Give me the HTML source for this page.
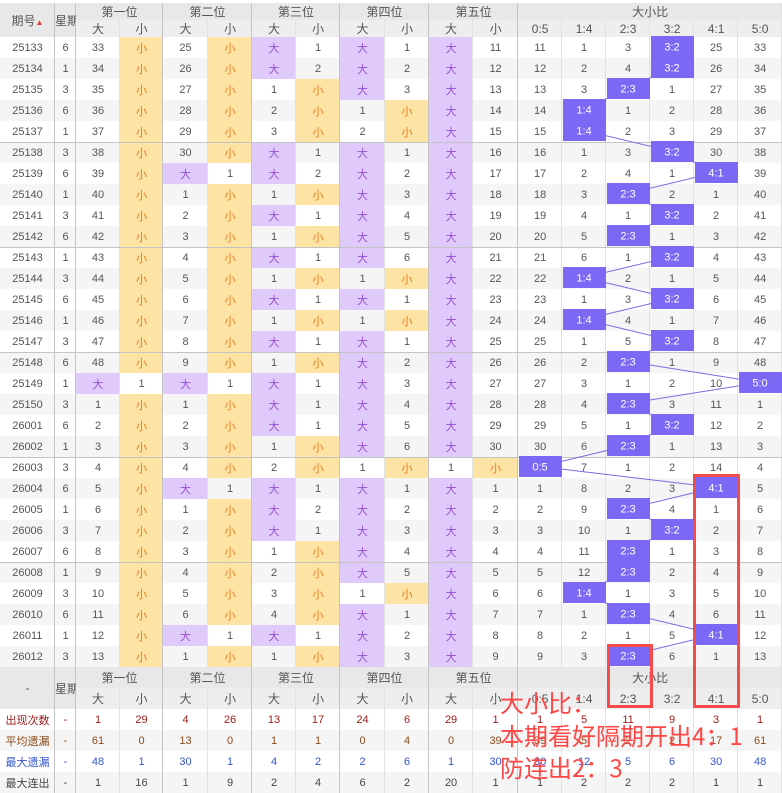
<!DOCTYPE html>
<html><head><meta charset="utf-8"><style>
body{margin:0;background:#fff;width:782px;height:792px;overflow:hidden;position:relative;font-family:"Liberation Sans","Noto Sans CJK SC",sans-serif;}
table{position:absolute;left:0;top:3px;border-collapse:separate;border-spacing:0;table-layout:fixed;width:782px;font-size:11px;color:#555;}
td{padding:0;text-align:center;height:21px;box-shadow:inset -1px 0 0 #e2e2e2;white-space:nowrap;overflow:hidden}
tr.d:nth-child(even) td{background:#f5f5f5}
tr.d td:nth-child(1),tr.d td:nth-child(2),tr.d td:nth-child(4),tr.d td:nth-child(6),tr.d td:nth-child(8),tr.d td:nth-child(10),tr.d td:nth-child(12){box-shadow:inset -1px 0 0 #c4c4c4}
tr.g td{box-shadow:inset 0 1px 0 #c4c4c4,inset -1px 0 0 #e2e2e2}
tr.g td:nth-child(1),tr.g td:nth-child(2),tr.g td:nth-child(4),tr.g td:nth-child(6),tr.g td:nth-child(8),tr.g td:nth-child(10),tr.g td:nth-child(12){box-shadow:inset 0 1px 0 #c4c4c4,inset -1px 0 0 #c4c4c4}
tr.d td.b{background:#e0c9fb!important;color:#9650d0}
tr.d td.s{background:#fde3a4!important;color:#f07a1c}
.h td{background:#e8e8e8;font-size:12px;color:#555}
.h2 td{background:#eeeeee}
td.G{box-shadow:inset -1px 0 0 #c4c4c4}
.h1 td{height:17px}.h2x td{height:16px}
.r1 td{color:#a01c1c}.r2 td{color:#8a4a1a}.r3 td{color:#3355cc}.r4 td{color:#444}
.st td{background:#fff}.st:nth-child(even) td{background:#f5f5f5}
svg{position:absolute;left:0;top:0}
.box{position:absolute;border:3px solid #f44b4b;box-sizing:border-box}
.ann{position:absolute;left:500px;color:#ff4646;font-size:24px;font-family:"Noto Sans CJK SC",sans-serif;line-height:32px;white-space:nowrap}
</style></head><body>
<table>
<colgroup><col style="width:55px"><col style="width:21px"><col style="width:44px"><col style="width:43px"><col style="width:45px"><col style="width:44px"><col style="width:44px"><col style="width:44px"><col style="width:45px"><col style="width:44px"><col style="width:44px"><col style="width:45px"><col style="width:44px"><col style="width:44px"><col style="width:44px"><col style="width:44px"><col style="width:44px"><col style="width:44px"></colgroup>
<tr class="h h1"><td rowspan="2" class="G">期号<span style="font-size:8px;color:#e33">▲</span></td><td rowspan="2" class="G">星期</td><td colspan="2" class="G">第一位</td><td colspan="2" class="G">第二位</td><td colspan="2" class="G">第三位</td><td colspan="2" class="G">第四位</td><td colspan="2" class="G">第五位</td><td colspan="6">大小比</td></tr>
<tr class="h h2 h2x"><td>大</td><td class="G">小</td><td>大</td><td class="G">小</td><td>大</td><td class="G">小</td><td>大</td><td class="G">小</td><td>大</td><td class="G">小</td><td>0:5</td><td>1:4</td><td>2:3</td><td>3:2</td><td>4:1</td><td>5:0</td></tr>
<tbody>
<tr class="d"><td>25133</td><td>6</td><td>33</td><td class="s">小</td><td>25</td><td class="s">小</td><td class="b">大</td><td>1</td><td class="b">大</td><td>1</td><td class="b">大</td><td>11</td><td>11</td><td>1</td><td>3</td><td></td><td>25</td><td>33</td></tr>
<tr class="d"><td>25134</td><td>1</td><td>34</td><td class="s">小</td><td>26</td><td class="s">小</td><td class="b">大</td><td>2</td><td class="b">大</td><td>2</td><td class="b">大</td><td>12</td><td>12</td><td>2</td><td>4</td><td></td><td>26</td><td>34</td></tr>
<tr class="d"><td>25135</td><td>3</td><td>35</td><td class="s">小</td><td>27</td><td class="s">小</td><td>1</td><td class="s">小</td><td class="b">大</td><td>3</td><td class="b">大</td><td>13</td><td>13</td><td>3</td><td></td><td>1</td><td>27</td><td>35</td></tr>
<tr class="d"><td>25136</td><td>6</td><td>36</td><td class="s">小</td><td>28</td><td class="s">小</td><td>2</td><td class="s">小</td><td>1</td><td class="s">小</td><td class="b">大</td><td>14</td><td>14</td><td></td><td>1</td><td>2</td><td>28</td><td>36</td></tr>
<tr class="d"><td>25137</td><td>1</td><td>37</td><td class="s">小</td><td>29</td><td class="s">小</td><td>3</td><td class="s">小</td><td>2</td><td class="s">小</td><td class="b">大</td><td>15</td><td>15</td><td></td><td>2</td><td>3</td><td>29</td><td>37</td></tr>
<tr class="d g"><td>25138</td><td>3</td><td>38</td><td class="s">小</td><td>30</td><td class="s">小</td><td class="b">大</td><td>1</td><td class="b">大</td><td>1</td><td class="b">大</td><td>16</td><td>16</td><td>1</td><td>3</td><td></td><td>30</td><td>38</td></tr>
<tr class="d"><td>25139</td><td>6</td><td>39</td><td class="s">小</td><td class="b">大</td><td>1</td><td class="b">大</td><td>2</td><td class="b">大</td><td>2</td><td class="b">大</td><td>17</td><td>17</td><td>2</td><td>4</td><td>1</td><td></td><td>39</td></tr>
<tr class="d"><td>25140</td><td>1</td><td>40</td><td class="s">小</td><td>1</td><td class="s">小</td><td>1</td><td class="s">小</td><td class="b">大</td><td>3</td><td class="b">大</td><td>18</td><td>18</td><td>3</td><td></td><td>2</td><td>1</td><td>40</td></tr>
<tr class="d"><td>25141</td><td>3</td><td>41</td><td class="s">小</td><td>2</td><td class="s">小</td><td class="b">大</td><td>1</td><td class="b">大</td><td>4</td><td class="b">大</td><td>19</td><td>19</td><td>4</td><td>1</td><td></td><td>2</td><td>41</td></tr>
<tr class="d"><td>25142</td><td>6</td><td>42</td><td class="s">小</td><td>3</td><td class="s">小</td><td>1</td><td class="s">小</td><td class="b">大</td><td>5</td><td class="b">大</td><td>20</td><td>20</td><td>5</td><td></td><td>1</td><td>3</td><td>42</td></tr>
<tr class="d g"><td>25143</td><td>1</td><td>43</td><td class="s">小</td><td>4</td><td class="s">小</td><td class="b">大</td><td>1</td><td class="b">大</td><td>6</td><td class="b">大</td><td>21</td><td>21</td><td>6</td><td>1</td><td></td><td>4</td><td>43</td></tr>
<tr class="d"><td>25144</td><td>3</td><td>44</td><td class="s">小</td><td>5</td><td class="s">小</td><td>1</td><td class="s">小</td><td>1</td><td class="s">小</td><td class="b">大</td><td>22</td><td>22</td><td></td><td>2</td><td>1</td><td>5</td><td>44</td></tr>
<tr class="d"><td>25145</td><td>6</td><td>45</td><td class="s">小</td><td>6</td><td class="s">小</td><td class="b">大</td><td>1</td><td class="b">大</td><td>1</td><td class="b">大</td><td>23</td><td>23</td><td>1</td><td>3</td><td></td><td>6</td><td>45</td></tr>
<tr class="d"><td>25146</td><td>1</td><td>46</td><td class="s">小</td><td>7</td><td class="s">小</td><td>1</td><td class="s">小</td><td>1</td><td class="s">小</td><td class="b">大</td><td>24</td><td>24</td><td></td><td>4</td><td>1</td><td>7</td><td>46</td></tr>
<tr class="d"><td>25147</td><td>3</td><td>47</td><td class="s">小</td><td>8</td><td class="s">小</td><td class="b">大</td><td>1</td><td class="b">大</td><td>1</td><td class="b">大</td><td>25</td><td>25</td><td>1</td><td>5</td><td></td><td>8</td><td>47</td></tr>
<tr class="d g"><td>25148</td><td>6</td><td>48</td><td class="s">小</td><td>9</td><td class="s">小</td><td>1</td><td class="s">小</td><td class="b">大</td><td>2</td><td class="b">大</td><td>26</td><td>26</td><td>2</td><td></td><td>1</td><td>9</td><td>48</td></tr>
<tr class="d"><td>25149</td><td>1</td><td class="b">大</td><td>1</td><td class="b">大</td><td>1</td><td class="b">大</td><td>1</td><td class="b">大</td><td>3</td><td class="b">大</td><td>27</td><td>27</td><td>3</td><td>1</td><td>2</td><td>10</td><td></td></tr>
<tr class="d"><td>25150</td><td>3</td><td>1</td><td class="s">小</td><td>1</td><td class="s">小</td><td class="b">大</td><td>1</td><td class="b">大</td><td>4</td><td class="b">大</td><td>28</td><td>28</td><td>4</td><td></td><td>3</td><td>11</td><td>1</td></tr>
<tr class="d"><td>26001</td><td>6</td><td>2</td><td class="s">小</td><td>2</td><td class="s">小</td><td class="b">大</td><td>1</td><td class="b">大</td><td>5</td><td class="b">大</td><td>29</td><td>29</td><td>5</td><td>1</td><td></td><td>12</td><td>2</td></tr>
<tr class="d"><td>26002</td><td>1</td><td>3</td><td class="s">小</td><td>3</td><td class="s">小</td><td>1</td><td class="s">小</td><td class="b">大</td><td>6</td><td class="b">大</td><td>30</td><td>30</td><td>6</td><td></td><td>1</td><td>13</td><td>3</td></tr>
<tr class="d g"><td>26003</td><td>3</td><td>4</td><td class="s">小</td><td>4</td><td class="s">小</td><td>2</td><td class="s">小</td><td>1</td><td class="s">小</td><td>1</td><td class="s">小</td><td></td><td>7</td><td>1</td><td>2</td><td>14</td><td>4</td></tr>
<tr class="d"><td>26004</td><td>6</td><td>5</td><td class="s">小</td><td class="b">大</td><td>1</td><td class="b">大</td><td>1</td><td class="b">大</td><td>1</td><td class="b">大</td><td>1</td><td>1</td><td>8</td><td>2</td><td>3</td><td></td><td>5</td></tr>
<tr class="d"><td>26005</td><td>1</td><td>6</td><td class="s">小</td><td>1</td><td class="s">小</td><td class="b">大</td><td>2</td><td class="b">大</td><td>2</td><td class="b">大</td><td>2</td><td>2</td><td>9</td><td></td><td>4</td><td>1</td><td>6</td></tr>
<tr class="d"><td>26006</td><td>3</td><td>7</td><td class="s">小</td><td>2</td><td class="s">小</td><td class="b">大</td><td>1</td><td class="b">大</td><td>3</td><td class="b">大</td><td>3</td><td>3</td><td>10</td><td>1</td><td></td><td>2</td><td>7</td></tr>
<tr class="d"><td>26007</td><td>6</td><td>8</td><td class="s">小</td><td>3</td><td class="s">小</td><td>1</td><td class="s">小</td><td class="b">大</td><td>4</td><td class="b">大</td><td>4</td><td>4</td><td>11</td><td></td><td>1</td><td>3</td><td>8</td></tr>
<tr class="d g"><td>26008</td><td>1</td><td>9</td><td class="s">小</td><td>4</td><td class="s">小</td><td>2</td><td class="s">小</td><td class="b">大</td><td>5</td><td class="b">大</td><td>5</td><td>5</td><td>12</td><td></td><td>2</td><td>4</td><td>9</td></tr>
<tr class="d"><td>26009</td><td>3</td><td>10</td><td class="s">小</td><td>5</td><td class="s">小</td><td>3</td><td class="s">小</td><td>1</td><td class="s">小</td><td class="b">大</td><td>6</td><td>6</td><td></td><td>1</td><td>3</td><td>5</td><td>10</td></tr>
<tr class="d"><td>26010</td><td>6</td><td>11</td><td class="s">小</td><td>6</td><td class="s">小</td><td>4</td><td class="s">小</td><td class="b">大</td><td>1</td><td class="b">大</td><td>7</td><td>7</td><td>1</td><td></td><td>4</td><td>6</td><td>11</td></tr>
<tr class="d"><td>26011</td><td>1</td><td>12</td><td class="s">小</td><td class="b">大</td><td>1</td><td class="b">大</td><td>1</td><td class="b">大</td><td>2</td><td class="b">大</td><td>8</td><td>8</td><td>2</td><td>1</td><td>5</td><td></td><td>12</td></tr>
<tr class="d"><td>26012</td><td>3</td><td>13</td><td class="s">小</td><td>1</td><td class="s">小</td><td>1</td><td class="s">小</td><td class="b">大</td><td>3</td><td class="b">大</td><td>9</td><td>9</td><td>3</td><td></td><td>6</td><td>1</td><td>13</td></tr>
</tbody>
<tr class="h"><td rowspan="2" class="G">-</td><td rowspan="2" class="G">星期</td><td colspan="2" class="G">第一位</td><td colspan="2" class="G">第二位</td><td colspan="2" class="G">第三位</td><td colspan="2" class="G">第四位</td><td colspan="2" class="G">第五位</td><td colspan="6">大小比</td></tr>
<tr class="h h2"><td>大</td><td class="G">小</td><td>大</td><td class="G">小</td><td>大</td><td class="G">小</td><td>大</td><td class="G">小</td><td>大</td><td class="G">小</td><td>0:5</td><td>1:4</td><td>2:3</td><td>3:2</td><td>4:1</td><td>5:0</td></tr>
<tr class="st r1"><td class="G">出现次数</td><td class="G">-</td><td>1</td><td class="G">29</td><td>4</td><td class="G">26</td><td>13</td><td class="G">17</td><td>24</td><td class="G">6</td><td>29</td><td class="G">1</td><td>1</td><td>5</td><td>11</td><td>9</td><td>3</td><td>1</td></tr>
<tr class="st r2"><td class="G">平均遗漏</td><td class="G">-</td><td>61</td><td class="G">0</td><td>13</td><td class="G">0</td><td>1</td><td class="G">1</td><td>0</td><td class="G">4</td><td>0</td><td class="G">39</td><td>39</td><td>5</td><td>2</td><td>2</td><td>17</td><td>61</td></tr>
<tr class="st r3"><td class="G">最大遗漏</td><td class="G">-</td><td>48</td><td class="G">1</td><td>30</td><td class="G">1</td><td>4</td><td class="G">2</td><td>2</td><td class="G">6</td><td>1</td><td class="G">30</td><td>30</td><td>12</td><td>5</td><td>6</td><td>30</td><td>48</td></tr>
<tr class="st r4"><td class="G">最大连出</td><td class="G">-</td><td>1</td><td class="G">16</td><td>1</td><td class="G">9</td><td>2</td><td class="G">4</td><td>6</td><td class="G">2</td><td>20</td><td class="G">1</td><td>1</td><td>2</td><td>2</td><td>2</td><td>1</td><td>1</td></tr>
</table>
<svg width="782" height="792" font-family="Liberation Sans,sans-serif" font-size="11">
<polyline fill="none" stroke="#7a6be0" stroke-width="1" points="672,46.5 672,67.5 628,88.5 584,109.5 584,130.5 672,151.5 716,172.5 628,193.5 672,214.5 628,235.5 672,256.5 584,277.5 672,298.5 584,319.5 672,340.5 628,361.5 760,382.5 628,403.5 672,424.5 628,445.5 540,466.5 716,487.5 628,508.5 672,529.5 628,550.5 628,571.5 584,592.5 628,613.5 716,634.5 628,655.5"/>
<g fill="#7b68f5">
<rect x="651" y="36" width="43" height="21"/><rect x="651" y="57" width="43" height="21"/><rect x="607" y="78" width="43" height="21"/><rect x="563" y="99" width="43" height="21"/><rect x="563" y="120" width="43" height="21"/><rect x="651" y="141" width="43" height="21"/><rect x="695" y="162" width="43" height="21"/><rect x="607" y="183" width="43" height="21"/><rect x="651" y="204" width="43" height="21"/><rect x="607" y="225" width="43" height="21"/><rect x="651" y="246" width="43" height="21"/><rect x="563" y="267" width="43" height="21"/><rect x="651" y="288" width="43" height="21"/><rect x="563" y="309" width="43" height="21"/><rect x="651" y="330" width="43" height="21"/><rect x="607" y="351" width="43" height="21"/><rect x="739" y="372" width="43" height="21"/><rect x="607" y="393" width="43" height="21"/><rect x="651" y="414" width="43" height="21"/><rect x="607" y="435" width="43" height="21"/><rect x="519" y="456" width="43" height="21"/><rect x="695" y="477" width="43" height="21"/><rect x="607" y="498" width="43" height="21"/><rect x="651" y="519" width="43" height="21"/><rect x="607" y="540" width="43" height="21"/><rect x="607" y="561" width="43" height="21"/><rect x="563" y="582" width="43" height="21"/><rect x="607" y="603" width="43" height="21"/><rect x="695" y="624" width="43" height="21"/><rect x="607" y="645" width="43" height="21"/>
</g>
<g fill="#fff" text-anchor="middle">
<text x="672" y="50.5">3:2</text><text x="672" y="71.5">3:2</text><text x="628" y="92.5">2:3</text><text x="584" y="113.5">1:4</text><text x="584" y="134.5">1:4</text><text x="672" y="155.5">3:2</text><text x="716" y="176.5">4:1</text><text x="628" y="197.5">2:3</text><text x="672" y="218.5">3:2</text><text x="628" y="239.5">2:3</text><text x="672" y="260.5">3:2</text><text x="584" y="281.5">1:4</text><text x="672" y="302.5">3:2</text><text x="584" y="323.5">1:4</text><text x="672" y="344.5">3:2</text><text x="628" y="365.5">2:3</text><text x="760" y="386.5">5:0</text><text x="628" y="407.5">2:3</text><text x="672" y="428.5">3:2</text><text x="628" y="449.5">2:3</text><text x="540" y="470.5">0:5</text><text x="716" y="491.5">4:1</text><text x="628" y="512.5">2:3</text><text x="672" y="533.5">3:2</text><text x="628" y="554.5">2:3</text><text x="628" y="575.5">2:3</text><text x="584" y="596.5">1:4</text><text x="628" y="617.5">2:3</text><text x="716" y="638.5">4:1</text><text x="628" y="659.5">2:3</text>
</g>
</svg>
<div class="box" style="left:607px;top:644px;width:46px;height:64px"></div>
<div class="box" style="left:693px;top:474px;width:47px;height:234px"></div>
<div class="ann" style="top:686px">大小比：</div>
<div class="ann" style="top:719px">本期看好隔期开出4：1</div>
<div class="ann" style="top:751px">防连出2：3</div>
</body></html>
